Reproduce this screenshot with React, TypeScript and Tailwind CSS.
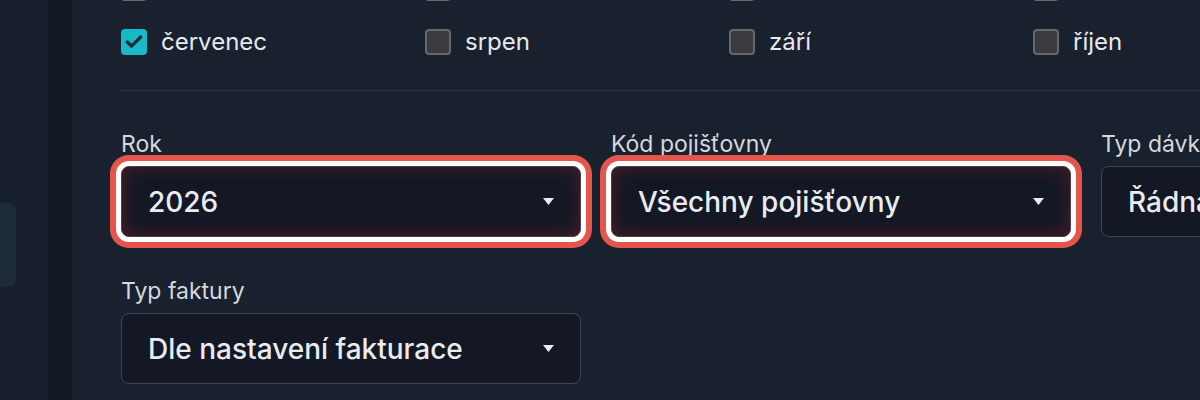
import { Check } from 'lucide-react';

const FONT = 'font-["Inter","Noto_Sans",sans-serif]';

const MONTH_ROWS = [
  ['leden', 'únor', 'březen', 'duben', 'květen', 'červen'],
  ['červenec', 'srpen', 'září', 'říjen', 'listopad', 'prosinec'],
];

const CHECKED = ['červenec'];

interface FieldProps {
  label: string;
  value: string;
  highlighted?: boolean;
}

function MonthCheckbox({ label, checked }: { label: string; checked: boolean }) {
  return (
    <label className="flex h-[26px] w-[304px] shrink-0 items-center gap-[14px]">
      {checked ? (
        <span className="flex h-[26px] w-[26px] items-center justify-center rounded-[4px] bg-[#19b8c6]">
          <Check className="h-[20px] w-[20px] text-[#1f2a33]" strokeWidth={4} />
        </span>
      ) : (
        <span className="h-[26px] w-[26px] rounded-[4px] border-2 border-[#67696d] bg-[#3a3b3d]" />
      )}
      <span className="text-[24px] leading-[26px] text-[#e6e9ef]">{label}</span>
    </label>
  );
}

function SelectField({ label, value, highlighted }: FieldProps) {
  return (
    <div className="flex w-[460px] shrink-0 flex-col gap-[6px]">
      <span className="text-[23px] leading-[32px] text-[#d4d8df]">{label}</span>
      <div
        className={
          highlighted
            ? 'flex h-[71px] items-center justify-between rounded-[8px] border border-[#4a3f48] bg-[#131824] pl-[26px] pr-[26px] shadow-[inset_0_0_18px_rgba(190,40,50,0.35),0_0_0_5px_#ffffff,0_0_0_11px_#e4554c]'
            : 'flex h-[71px] items-center justify-between rounded-[8px] border border-[#3d4554] bg-[#131824] pl-[26px] pr-[26px]'
        }
      >
        <span className="text-[28px] font-medium text-[#e8ebf0]">{value}</span>
        <svg width="11" height="7" viewBox="0 0 11 7" className="text-[#e8ebf0]">
          <path d="M0 0h11L5.5 7z" fill="currentColor" />
        </svg>
      </div>
    </div>
  );
}

export default function App() {
  return (
    <div className={`flex h-[400px] w-[1200px] overflow-hidden bg-[#19202e] ${FONT}`}>
      {/* sidebar */}
      <div className="flex w-[48px] shrink-0 flex-col bg-[#182030] pt-[203px]">
        <div className="h-[84px] w-[16px] rounded-r-[8px] bg-[#1e2c3a]" />
      </div>
      <div className="w-[24px] shrink-0 bg-[#121823]" />

      {/* main */}
      <div className="flex min-w-0 flex-1 flex-col pl-[49px]">
        <div className="mt-[-25px] flex flex-col gap-[28px]">
          {MONTH_ROWS.map((row, i) => (
            <div key={i} className="flex">
              {row.map((m) => (
                <MonthCheckbox key={m} label={m} checked={CHECKED.includes(m)} />
              ))}
            </div>
          ))}
        </div>

        <div className="mt-[35px] h-px w-[1800px] bg-[#2c3544]" />

        <div className="mt-[37px] flex flex-col gap-[38px]">
          <div className="flex gap-[30px]">
            <SelectField label="Rok" value="2026" highlighted />
            <SelectField label="Kód pojišťovny" value="Všechny pojišťovny" highlighted />
            <SelectField label="Typ dávky" value="Řádná" />
          </div>
          <div className="flex gap-[30px]">
            <SelectField label="Typ faktury" value="Dle nastavení fakturace" />
          </div>
        </div>
      </div>
    </div>
  );
}
